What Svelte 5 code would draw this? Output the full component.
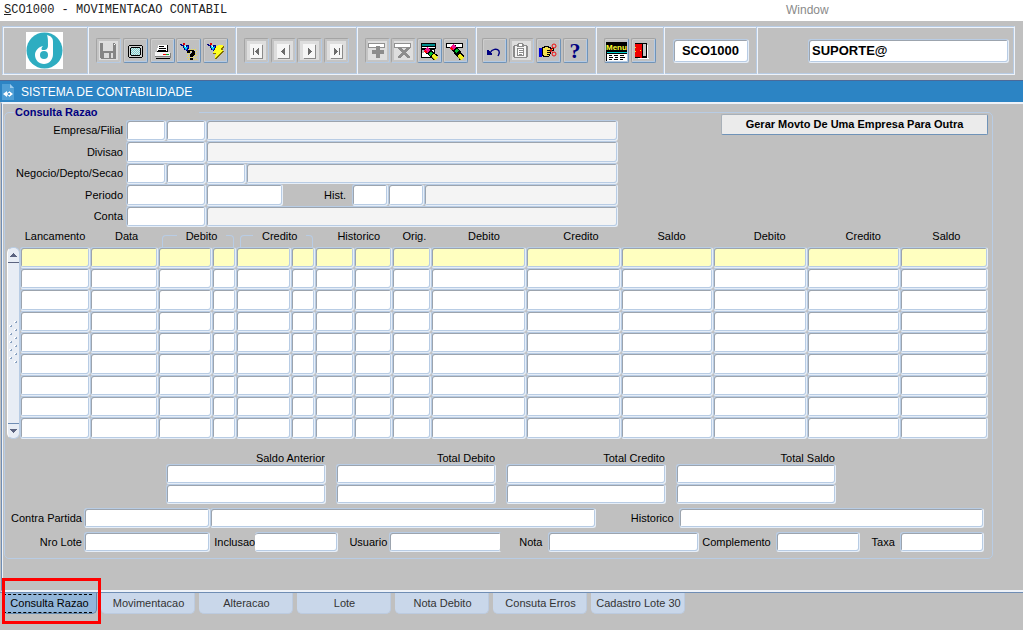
<script>
  const toolGroups = [
    [
      ['save', 'Salvar', true], ['screen', 'Tela'], ['print', 'Imprimir'],
      ['enterq', 'Entrar consulta'], ['execq', 'Executar consulta']
    ],
    [
      ['first', 'Primeiro', true], ['prev', 'Anterior', true],
      ['next', 'Proximo', true], ['last', 'Ultimo', true]
    ],
    [
      ['insert', 'Inserir', true], ['remove', 'Remover', true],
      ['clearblock', 'Limpar bloco'], ['clearrec', 'Limpar registro']
    ],
    [
      ['undo', 'Desfazer'], ['clip', 'Lista', true],
      ['cut', 'Recortar'], ['help', 'Ajuda']
    ],
    [['menu', 'Menu'], ['exit', 'Sair']]
  ];

  const headers = [
    { text: 'Lancamento', span: 1, pad: 'p0' },
    { text: 'Data', span: 1, pad: 'p5' },
    { text: 'Debito', span: 2, bracket: true },
    { text: 'Credito', span: 2, bracket: true },
    { text: 'Historico', span: 2, pad: 'p10' },
    { text: 'Orig.', span: 1, pad: 'p5' },
    { text: 'Debito', span: 1, pad: 'p10' },
    { text: 'Credito', span: 1, pad: 'p15' },
    { text: 'Saldo', span: 1, pad: 'p10' },
    { text: 'Debito', span: 1, pad: 'p20' },
    { text: 'Credito', span: 1, pad: 'p20' },
    { text: 'Saldo', span: 1, pad: 'p5' }
  ];
  const columns = [70, 68, 54, 24, 55, 24, 39, 38, 39, 95, 94, 92, 94, 93, 88];
  const rows = Array.from({ length: 9 }, (_, i) => i);
  const totals = ['Saldo Anterior', 'Total Debito', 'Total Credito', 'Total Saldo'];
  const tabs = ['Consulta Razao', 'Movimentacao', 'Alteracao', 'Lote', 'Nota Debito', 'Consuta Erros', 'Cadastro Lote 30'];

  let active = $state('Consulta Razao');
  let program = $state('SCO1000');
  let user = $state('SUPORTE@');
</script>

{#snippet pen()}
  <path fill="#e00000" d="M7 4h2v2h-2z" />
  <path fill="#000080" d="M4 5h2v1h-2zM5 6h3v1h2v-1h3v4h-1v2h-2v-1h-2v-2h-1v-2h-2z" />
  <path fill="#00e0f0" d="M8 7h2v1h1v2h-2v-1h-1z" />
  <path fill="#0060ff" d="M11 7h1v2h-1zM9 10h2v1h-2z" />
  <path fill="#fff" d="M9 7h1v1h-1z" />
{/snippet}

{#snippet marker(y)}
  <g fill="none">
    <path stroke="#000" stroke-width="6" d="M10 {y}L19 19" />
    <path stroke="#f01090" stroke-width="5" d="M9 {y - 1}l3 3" />
    <path stroke="#ff0000" stroke-width="2" d="M8 {y + 1}l2 2" />
    <path stroke="#00c030" stroke-width="4" d="M13 {y + 3}l2 2" />
    <path stroke="#f0f020" stroke-width="4" d="M16 16l4 4" />
    <path stroke="#909000" stroke-width="1" d="M15 18l3 3" />
  </g>
{/snippet}

{#snippet navPanel()}
  <path fill="#8a8a8a" d="M7 6h12v14h-12z" />
  <path fill="#f6f6f6" d="M6 5h12v14h-12z" />
{/snippet}

{#snippet icon(name)}
  <svg viewBox="0 0 24 24" width="24" height="24" shape-rendering="crispEdges" aria-hidden="true">
    {#if name === 'save'}
      <path fill="#858585" d="M4 4h15v1h1v15h-15v-1h-1z" />
      <path fill="#dcdcdc" d="M7 4h10v8h-10zM8 14h9v5h-9z" />
      <path fill="#858585" d="M13 14h2v5h-2z" />
      <path fill="#fff" d="M18 5h1v1h-1z" />
    {:else if name === 'screen'}
      <path fill="#000" d="M6 6h13v1h1v11h-1v1h-13v-1h-1v-11h1z" />
      <path fill="#d0d0d0" d="M6 7h13v11h-13z" />
      <path fill="#000" d="M8 8h9v1h1v7h-1v1h-9v-1h-1v-7h1z" />
      <path fill="#e8e8e8" d="M8 9h9v7h-9z" />
      <path stroke="#70d0d0" stroke-dasharray="1 1" d="M8 9.500h9M9 10.500h8M8 11.500h9M9 12.500h8M8 13.500h9M9 14.500h8M8 15.500h9" />
    {:else if name === 'print'}
      <path fill="#fff" d="M8 6h10v7h-11v-4h1z" />
      <path fill="#000" d="M9 7h5v1h-5zM9 9h7v1h-7zM8 11h8v1h-8zM17 6h1v7h-1zM7 12h11v1h-11z" />
      <path fill="#f4f4f4" d="M5 13h15v5h-15z" />
      <path fill="#808080" d="M20 14h1v5h-1zM5 17h15v1h-15z" />
      <path fill="#000" d="M6 19h14v1h-14z" />
      <path fill="#f00" d="M13 15h3v1h-3z" />
      <path fill="#00b020" d="M16 15h3v1h-3z" />
    {:else if name === 'enterq'}
      {@render pen()}
      <path stroke="#f0e040" stroke-dasharray="1 1" d="M13 10.500h8M12 12.500h9M11 14.500h10M12 16.500h9M11 18.500h10M12 20.500h9" />
      <path fill="#000" d="M12 11h6v1h1v4h-1v1h-1v1h-3v-3h1v-1h1v-2h-2v2h-3v-2h1zM14 19h3v2h-3z" />
    {:else if name === 'execq'}
      {@render pen()}
      <path fill="#807000" d="M15 7h6v2h-1v2h-1v1h2v1h-1v1h-1v1h-1v1h-1v1h-1v1h-1v1h-1v1h-2v-3h1v-2h-3v-1h1v-2h1v-2h1v-2h1z" />
      <path fill="#ffff20" d="M15 6h5v2h-1v1h-1v2h2v1h-1v1h-1v1h-1v1h-1v1h-1v1h-1v1h-1v1h-1v-3h1v-2h-3v-1h1v-2h1v-2h1v-2h1z" />
    {:else if name === 'first'}
      {@render navPanel()}
      <path fill="#6c6c6c" d="M9 9h1v7h-1zM14 9h1v7h-1v-1h-1v-1h-1v-1h-1v-1h1v-1h1v-1h1z" />
    {:else if name === 'prev'}
      {@render navPanel()}
      <path fill="#6c6c6c" d="M13 9h1v7h-1v-1h-1v-1h-1v-1h-1v-1h1v-1h1v-1h1z" />
    {:else if name === 'next'}
      {@render navPanel()}
      <path fill="#6c6c6c" d="M11 9h1v1h1v1h1v1h1v1h-1v1h-1v1h-1v1h-1z" />
    {:else if name === 'last'}
      {@render navPanel()}
      <path fill="#6c6c6c" d="M10 9h1v1h1v1h1v1h1v1h-1v1h-1v1h-1v1h-1zM15 9h1v7h-1z" />
    {:else if name === 'insert'}
      <path fill="#909090" d="M3 4h17v5h-17z" />
      <path fill="#fff" d="M4 5h15v3h-15z" />
      <path fill="#8c8c8c" d="M11 7h4v4h4v4h-4v4h-4v-4h-4v-4h4z" />
    {:else if name === 'remove'}
      <path fill="#909090" d="M3 4h17v5h-17z" />
      <path fill="#fff" d="M4 5h15v3h-15z" />
      <path fill="#8c8c8c" d="M7 8h3v1h1v1h1v1h2v-1h1v-1h1v-1h3v2h-1v1h-1v1h-1v1h-1v1h1v1h1v1h1v1h1v2h-3v-1h-1v-1h-1v-1h-2v1h-1v1h-1v1h-3v-2h1v-1h1v-1h1v-1h1v-1h-1v-1h-1v-1h-1v-1h-1z" />
    {:else if name === 'clearblock'}
      <path fill="#000" d="M4 4h15v6h-1v9h-14z" />
      <path fill="#008c8c" d="M5 5h13v2h-13z" />
      <path fill="#fff" d="M5 8h13v1h-13zM5 11h12v7h-12z" />
      <path fill="#b8b8b8" d="M5 11h3v1h-1v2h-2z" />
      {@render marker(11)}
    {:else if name === 'clearrec'}
      <path fill="#000" d="M3 4h17v5h-17z" />
      <path fill="#fff" d="M4 5h15v3h-15z" />
      {@render marker(8)}
    {:else if name === 'undo'}
      <path fill="none" stroke="#000080" stroke-width="1.400" shape-rendering="auto" d="M8 14c2-4 7-5 9-2c1 2 0 3-1 5" />
      <path fill="#000080" d="M5 11h2v1h1v1h1v1h1v2h-5z" />
    {:else if name === 'clip'}
      <path fill="#8c8c8c" d="M9 4h5v1h1v1h3v1h1v11h-1v1h-13v-1h-1v-11h1v-1h3v-1h1z" />
      <path fill="#f4f4f4" d="M6 7h11v11h-11z" />
      <path fill="#8c8c8c" d="M8 6h7v2h-7zM8 9h7v8h-7z" />
      <path fill="#fff" d="M10 5h3v2h-3zM9 10h5v6h-5z" />
      <path fill="#8c8c8c" d="M10 11h4v1h-4zM10 13h4v1h-4zM10 15h3v1h-3z" />
    {:else if name === 'cut'}
      <path fill="#0000e0" d="M3 9h3v9h-3z" />
      <path fill="#000" d="M6 8h2v-1h5v1h2v1h3v3h-3v3h-1v2h-1v1h-6v-1h-1z" />
      <path fill="#f4e050" d="M7 9h2v-1h3v1h2v1h3v1h-6v1h3v1h-3v1h3v1h-3v1h2v1h-5v-1h-1z" />
      <g fill="none" stroke="#f01010" shape-rendering="auto">
        <circle cx="18" cy="7" r="2" /><circle cx="18" cy="15" r="2" />
        <path d="M14 13l3-5M14 10l3 4" />
      </g>
    {:else if name === 'help'}
      <text x="12" y="19" text-anchor="middle" class="q">?</text>
    {:else if name === 'menu'}
      <path fill="#000" d="M2 3h21v19h-21z" />
      <text x="2" y="11" class="m">Menu</text>
      <path fill="#00d0d0" d="M3 13h20v1h-20z" />
      <path fill="#fff" d="M3 15h20v7h-20z" />
      <path fill="#000" d="M5 16h3v1h-3zM10 16h4v1h-4zM16 16h4v1h-4zM5 18h4v1h-4zM11 18h3v1h-3zM16 18h5v1h-5zM5 20h3v1h-3zM10 20h4v1h-4zM16 20h3v1h-3z" />
    {:else if name === 'exit'}
      <path fill="#fff" d="M7 19h11v1h-11zM16 6h1v13h-1z" />
      <path fill="#000" d="M4 4h12v15h-12z" />
      <path fill="#c8c8c8" d="M12 5h3v12h-3z" />
      <path fill="#f00000" d="M4 5h7v14h-2v-1h-5z" />
      <path fill="#ffe020" d="M4 8h1v1h-1zM4 12h1v1h-1zM9 11h1v1h-1z" />
    {/if}
  </svg>
{/snippet}

<div class="app">
  <header class="menubar">
    <span class="apptitle"><u>S</u>CO1000 - MOVIMENTACAO CONTABIL</span>
    <button class="windowmenu" type="button">Window</button>
  </header>

  <div class="toolzone">
    <div class="toolbar">
      <div class="cell logo">
        <svg viewBox="0 0 37 37" width="37" height="37" role="img" aria-label="Logo">
          <rect width="37" height="37" fill="#fff" />
          <circle cx="18.500" cy="18.500" r="18" fill="#2eadc1" />
          <path fill="#fff" d="M21 3C25 4 27 6 27 10V22C27 28 23 32 18 32C13 32 9 28 9 23C9 19 12 15 17 14C15 16 15 18 17 18C19 18 22 18 22 13C22 8 22 6 21 3Z" />
          <circle cx="18" cy="23" r="4" fill="#2eadc1" />
        </svg>
      </div>
      {#each toolGroups as group, g}
        <div class="cell tools g{g}">
          {#each group as [name, label, disabled]}
            <button type="button" class="tool" aria-label={label} disabled={!!disabled}>{@render icon(name)}</button>
          {/each}
        </div>
      {/each}
      <div class="cell prog"><input class="field strong center" aria-label="Programa" bind:value={program} /></div>
      <div class="cell user"><input class="field strong" aria-label="Usuario conectado" bind:value={user} /></div>
    </div>
  </div>

  <div class="titlebar">
    <svg viewBox="0 0 14 16" width="14" height="16" aria-hidden="true">
      <path fill="#4f9fd6" d="M1 0h8l4 4v12h-12z" />
      <path fill="#9ccbee" d="M9 0l4 4h-4z" />
      <path fill="#fff" d="M6 7v6l-4-3zM8 7l4 3-4 3z" />
      <circle cx="8" cy="10" r="2" fill="#fff" />
      <circle cx="8" cy="10" r="1" fill="#2c84c4" />
    </svg>
    <h1>SISTEMA DE CONTABILIDADE</h1>
  </div>

  <main class="page">
    <fieldset class="panel">
      <legend>Consulta Razao</legend>
      <div class="top">
        <div class="form">
          <div class="row">
            <label for="empresa">Empresa/Filial</label>
            <input id="empresa" class="field w40" /><input class="field w40" aria-label="Filial" />
            <input class="field ro grow" aria-label="Nome da empresa" readonly />
          </div>
          <div class="row">
            <label for="divisao">Divisao</label>
            <input id="divisao" class="field w80" />
            <input class="field ro grow" aria-label="Nome da divisao" readonly />
          </div>
          <div class="row">
            <label for="negocio">Negocio/Depto/Secao</label>
            <input id="negocio" class="field w40" /><input class="field w40" aria-label="Depto" /><input class="field w40" aria-label="Secao" />
            <input class="field ro grow" aria-label="Nome da secao" readonly />
          </div>
          <div class="row">
            <label for="periodo">Periodo</label>
            <input id="periodo" class="field w80" /><input class="field w77" aria-label="Periodo final" />
            <label for="hist" class="hist">Hist.</label>
            <input id="hist" class="field w36" /><input class="field w36" aria-label="Historico final" />
            <input class="field ro grow" aria-label="Descricao do historico" readonly />
          </div>
          <div class="row">
            <label for="conta">Conta</label>
            <input id="conta" class="field w80" />
            <input class="field ro grow" aria-label="Nome da conta" readonly />
          </div>
        </div>
        <button type="button" class="action">Gerar Movto De Uma Empresa Para Outra</button>
      </div>

      <div class="gridwrap">
        <div class="scroll">
          <button type="button" aria-label="Subir"><svg viewBox="0 0 7 4" width="7" height="4" shape-rendering="crispEdges"><path fill="#5c6480" d="M3 0h1v1h1v1h1v1h1v1h-7v-1h1v-1h1v-1h1z" /></svg></button>
          <div class="thumb">
            <svg viewBox="0 0 9 44" width="9" height="44" shape-rendering="crispEdges" aria-hidden="true">
              {#each [0, 1, 2, 3, 4, 5] as i}
                <path fill="#fff" d="M5 {i * 8}h2v1h-1v1h-1zM0 {i * 8 + 4}h2v1h-1v1h-1z" />
                <path fill="#8ba3c2" d="M7 {i * 8}h1v2h-2v-1h1zM2 {i * 8 + 4}h1v2h-2v-1h1z" />
              {/each}
            </svg>
          </div>
          <button type="button" aria-label="Descer"><svg viewBox="0 0 7 4" width="7" height="4" shape-rendering="crispEdges"><path fill="#5c6480" d="M0 0h7v1h-1v1h-1v1h-1v1h-1v-1h-1v-1h-1v-1h-1z" /></svg></button>
        </div>
        <table>
          <colgroup>
            {#each columns as w}<col style="width: {w}px" />{/each}
          </colgroup>
          <thead>
            <tr>
              {#each headers as h}
                <th colspan={h.span} class={h.pad}>
                  {#if h.bracket}<div class="bracket"><span>{h.text}</span></div>{:else}{h.text}{/if}
                </th>
              {/each}
            </tr>
          </thead>
          <tbody>
            {#each rows as r}
              <tr class:current={r === 0}>
                {#each columns as _, c}
                  <td><input class="field" aria-label="Linha {r + 1} coluna {c + 1}" /></td>
                {/each}
              </tr>
            {/each}
          </tbody>
        </table>
      </div>

      <div class="totals">
        {#each totals as t, i}
          <div class="total">
            <label for="total{i}">{t}</label>
            <input id="total{i}" class="field" />
            <input class="field" aria-label="{t} 2" />
          </div>
        {/each}
      </div>

      <div class="line contra">
        <label for="contra" class="tight">Contra Partida</label><input id="contra" class="field" />
        <input class="field" aria-label="Nome da contra partida" />
        <label for="historico">Historico</label><input id="historico" class="field" />
      </div>
      <div class="line lote">
        <label for="lote" class="tight">Nro Lote</label><input id="lote" class="field" />
        <label for="inclusao" class="flush">Inclusao</label><input id="inclusao" class="field openleft" />
        <label for="usuario" class="tight">Usuario</label><input id="usuario" class="field openright" />
        <label for="nota">Nota</label><input id="nota" class="field" />
        <label for="compl">Complemento</label><input id="compl" class="field" />
        <label for="taxa">Taxa</label><input id="taxa" class="field" />
      </div>
    </fieldset>
  </main>

  <nav class="tabs">
    {#each tabs as t}
      <button type="button" class:active={active === t} onclick={() => (active = t)}>
        <span>{t}</span>
      </button>
    {/each}
    <div class="highlight"></div>
  </nav>
</div>

<style>
  :global(body) {
    background: #c0c0c0;
  }
  .app, .app * {
    box-sizing: border-box;
  }
  .app {
    font: 11px/13px "Liberation Sans", Arial, sans-serif;
    color: #000;
    background: #c0c0c0;
    min-height: 100vh;
  }
  button {
    font: inherit;
    color: inherit;
    padding: 0;
    border: 0;
    background: none;
  }
  .menubar {
    display: grid;
    grid-template-columns: 786fr 237fr;
    align-items: center;
    height: 21px;
    background: #fff;
    padding-bottom: 1px;
  }
  .apptitle {
    font: 12px/16px "Liberation Mono", "Courier New", monospace;
    padding-left: 4px;
    color: #222;
  }
  .windowmenu {
    font-size: 12px;
    color: #8a8a8a;
    justify-self: start;
  }
  .toolzone {
    padding: 5px 8px 5px 2px;
  }
  .toolbar {
    display: flex;
    height: 49px;
    border: 1px solid #b8cce4;
    border-right-color: #eef3fa;
    border-bottom-color: #eef3fa;
    box-shadow: inset 1px 1px #eef3fa, inset -1px -1px #b8cce4;
  }
  .cell {
    display: flex;
    align-items: center;
    justify-content: center;
    border-left: 1px solid #b8cce4;
    box-shadow: inset 1px 0 #eef3fa;
    padding: 0 7px 0 8px;
    flex: none;
  }
  .logo {
    width: 84px;
    padding: 0 8px 0 6px;
    border-left: 0;
    box-shadow: none;
  }
  .tools {
    justify-content: space-between;
  }
  .g0 { width: 148px; }
  .g1 { width: 121px; }
  .g2 { width: 119px; }
  .g3 { width: 120px; padding: 0 7px 0 6px; }
  .g4 { width: 68px; }
  .prog { width: 93px; }
  .user {
    flex: 1;
    justify-content: flex-end;
    padding-right: 5px;
  }
  .tool {
    width: 25px;
    height: 25px;
    border: 1px solid #a4a4a4;
    border-right-color: #6f93b8;
    border-bottom-color: #6f93b8;
    border-radius: 2px;
    box-shadow: inset 1px 1px #cdcdcd, inset -1px -1px #b4cae4;
    overflow: hidden;
  }
  .tool svg {
    display: block;
    margin: -1px;
  }
  .tool:disabled {
    background: #dedede;
    border-right-color: #b4cae4;
    border-bottom-color: #b4cae4;
    box-shadow: inset 0 0 0 2px #c4c4c4;
  }
  .q {
    font: bold 22px "Liberation Serif", serif;
    fill: #000080;
  }
  .m {
    font: bold 8px "Liberation Sans", sans-serif;
    fill: #ffff30;
  }
  .field {
    display: block;
    min-width: 0;
    width: 100%;
    height: 21px;
    margin: 0;
    padding: 0 3px;
    font: inherit;
    border: 1px solid #b8cce4;
    border-right-color: #e6eef8;
    border-bottom-color: #e6eef8;
    border-radius: 3px;
    background: #fff;
    box-shadow: inset 1px 1px #9ca4ae, inset -1px -1px #b8cce4;
    outline: none;
  }
  .ro {
    background: #f4f4f4;
  }
  .strong {
    font-size: 13px;
    font-weight: bold;
    height: 24px;
  }
  .center {
    text-align: center;
  }
  .prog .field { width: 76px; }
  .user .field { width: 201px; }

  .titlebar {
    display: flex;
    align-items: center;
    gap: 6px;
    height: 22px;
    padding: 1px 0 0 1px;
    background: #2c84c4;
    border-top: 1px solid #4b6a9a;
  }
  .titlebar h1 {
    margin: 0;
    font-size: 12px;
    font-weight: normal;
    color: #fff;
  }
  .page {
    margin-left: 1px;
    border-left: 1px solid #6f8db4;
    border-top: 2px solid #eef2f8;
    border-bottom: 2px solid #eef2f8;
    box-shadow: inset 1px 0 #eef2f8;
    padding: 2px 30px 31px 2px;
  }
  .panel {
    margin: 0;
    min-width: 0;
    padding: 1px 0 6px;
    border: 1px solid #b8cce4;
    border-radius: 5px;
  }
  legend {
    width: 185px;
    margin-left: 9px;
    padding: 0 1px;
    font-weight: bold;
    color: #000080;
  }
  .top {
    display: flex;
    justify-content: space-between;
    align-items: flex-start;
    padding-right: 4px;
  }
  .form {
    flex: 0 1 613px;
  }
  .row {
    display: flex;
    align-items: center;
    height: 21px;
  }
  .row:nth-child(even) {
    height: 22px;
  }
  .row .field {
    flex: none;
    height: 100%;
  }
  .row .grow {
    flex: 1;
  }
  label {
    text-align: right;
    white-space: nowrap;
    padding-right: 5px;
  }
  .row label {
    flex: none;
    width: 121px;
    padding-right: 3px;
  }
  .row .hist {
    width: 69px;
    padding-right: 6px;
  }
  .w36 { width: 36px; }
  .w40 { width: 40px; }
  .w77 { width: 77px; }
  .w80 { width: 80px; }
  .action {
    width: 267px;
    height: 21px;
    margin-top: -6px;
    font-weight: bold;
    background: #ebebeb;
    border: 1px solid #a8b0b8;
    border-right-color: #6f93b8;
    border-bottom-color: #6f93b8;
    border-radius: 2px;
  }

  .gridwrap {
    display: flex;
    align-items: stretch;
    padding: 0 4px 0 2px;
  }
  .scroll {
    flex: none;
    display: flex;
    flex-direction: column;
    width: 13px;
    margin-top: 20px;
    background: #e8edf5;
    border: 1px solid #b8cce4;
    border-left-color: #fff;
    border-radius: 6px;
  }
  .scroll button {
    height: 14px;
    display: grid;
    place-items: center;
  }
  .thumb {
    flex: 1;
    display: grid;
    place-items: center;
    border-top: 1px solid #5c6480;
    border-bottom: 1px solid #6f8db4;
  }
  table {
    flex: 1;
    table-layout: fixed;
    width: 100%;
    border-collapse: collapse;
  }
  th, td {
    padding: 0;
  }
  th {
    height: 20px;
    font-weight: normal;
    text-align: center;
  }
  .p0, .p5, .p10, .p15, .p20 { padding-bottom: 1px; }
  .p5 { padding-left: 5px; }
  .p10 { padding-left: 10px; }
  .p15 { padding-left: 15px; }
  .p20 { padding-left: 20px; }
  .bracket {
    display: flex;
    align-items: flex-end;
    height: 20px;
    padding: 0 2px 0 4px;
  }
  .bracket span {
    padding: 0 9px 4px;
  }
  .bracket::before,
  .bracket::after {
    content: "";
    height: 11px;
    border-top: 1px solid #b8cce4;
  }
  .bracket::before {
    flex: 2;
    border-left: 1px solid #b8cce4;
    border-top-left-radius: 4px;
  }
  .bracket::after {
    flex: 1;
    border-right: 1px solid #b8cce4;
    border-top-right-radius: 4px;
  }
  td {
    height: 21px;
  }
  tbody tr:nth-child(3n) td {
    height: 22px;
  }
  tbody tr:nth-child(3n) .field {
    height: 22px;
  }
  .current .field {
    background: #ffffc0;
  }

  .totals {
    display: grid;
    grid-template-columns: repeat(4, 160fr) 146fr;
    column-gap: 10px;
    margin-top: 14px;
    padding-left: 161px;
  }
  .total {
    display: flex;
    flex-direction: column;
  }
  .total label {
    padding-right: 1px;
    line-height: 11px;
  }
  .total .field {
    height: 20px;
  }
  .line {
    display: grid;
    align-items: center;
    margin-top: 4px;
    padding-right: 8px;
  }
  .line .field {
    height: 20px;
  }
  .contra {
    grid-template-columns: 79px 126fr 385fr 83px 305fr;
  }
  .lote {
    grid-template-columns: 79px 126fr 45px 83fr 51px 112fr 46px 151fr 77px 84fr 40px 84fr;
  }
  .tight {
    padding-right: 2px;
  }
  .flush {
    padding-right: 0;
  }
  .openleft {
    border-left: 0;
    box-shadow: inset 0 1px #9ca4ae, inset -1px -1px #b8cce4;
  }
  .openright {
    border-right: 2px solid #c0c0c0;
    box-shadow: inset 1px 1px #9ca4ae, inset 0 -1px #b8cce4;
  }

  .tabs {
    position: relative;
    display: flex;
    gap: 4px;
    padding-left: 3px;
    border-top: 1px solid #6f8db4;
  }
  .tabs button {
    width: 94px;
    height: 21px;
    padding-left: 2px;
    color: #333;
    background: #c9d7ea;
    border-right: 1px solid #bccbe0;
    border-bottom: 1px solid #bccbe0;
    border-radius: 0 0 5px 5px;
    white-space: nowrap;
  }
  .tabs .active {
    padding: 0 4px 0 0;
    color: #000;
    background: #93b6d9;
    border-color: #6488ac;
  }
  .tabs .active span {
    display: block;
    padding: 2px 0 2px 4px;
    border-top: 1px dashed #000;
    border-bottom: 1px dashed #000;
  }
  .highlight {
    position: absolute;
    left: 2px;
    top: -15px;
    width: 99px;
    height: 46px;
    border: 3px solid #ff0000;
    pointer-events: none;
  }
</style>
